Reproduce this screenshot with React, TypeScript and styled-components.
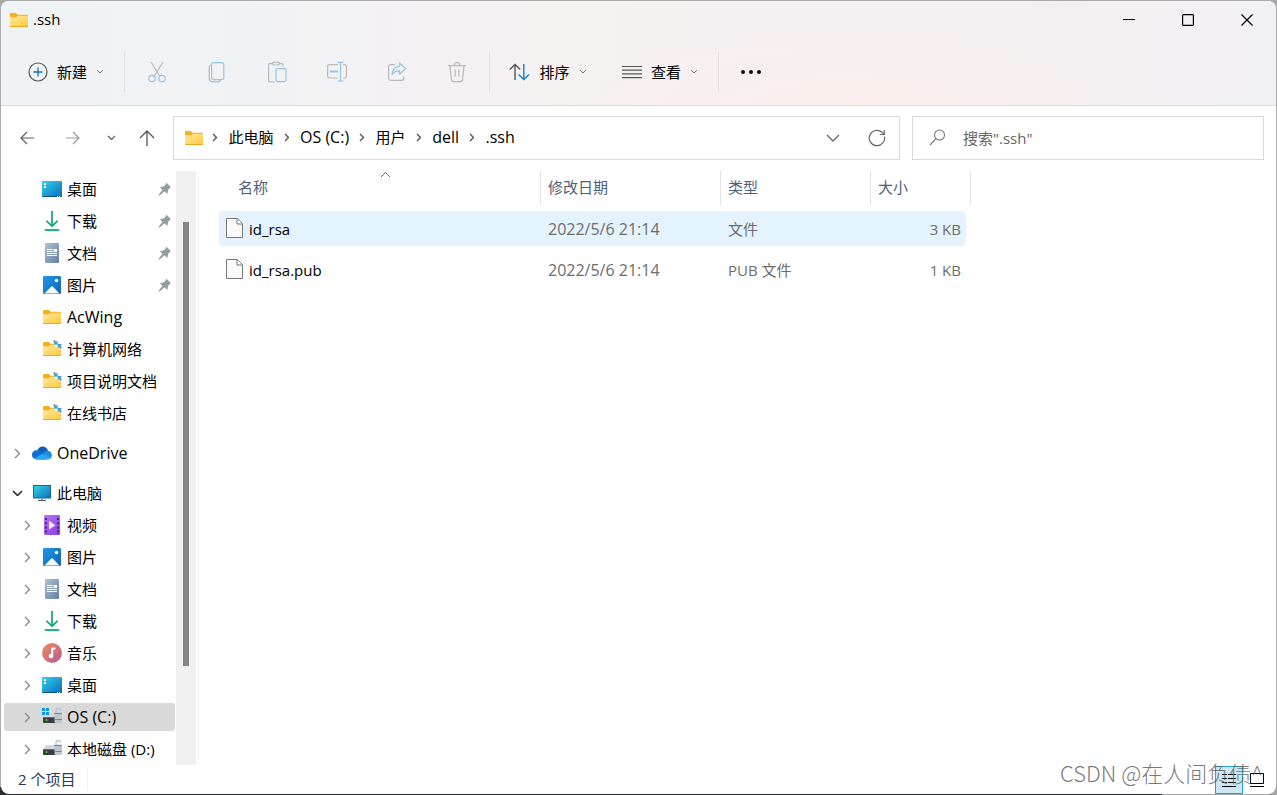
import React from "react";
import styled, { createGlobalStyle, css } from "styled-components";

const Global = createGlobalStyle`
  *, *::before, *::after { box-sizing: border-box; }
  html, body, #root { height: 100%; }
  body { margin: 0; overflow: hidden; }
  body, button, input, table {
    font-family: "Open Sans", "Noto Sans CJK SC", sans-serif;
    font-size: 15px;
    line-height: 20px;
    color: #000;
  }
`;

const Desktop = styled.div`
  height: 100vh;
  padding: 1px;
  background:
    linear-gradient(90deg, #2b2e33 0 91%, #a5a5a5 91%) bottom / 100% 8px no-repeat,
    #ababab;
`;

const Window = styled.main`
  position: relative;
  display: flex;
  flex-direction: column;
  height: 100%;
  border-radius: 8px;
  background: #fff;
  overflow: hidden;
`;

const Header = styled.header`
  border-bottom: 1px solid #dfdcdd;
  background:
    radial-gradient(ellipse 280px 80px at 67% 108%, rgba(252, 238, 235, 0.8), rgba(252, 238, 235, 0)),
    linear-gradient(90deg, #eff3f6 0%, #f2f2f4 22%, #f6f1f1 50%, #f5f0f1 76%, #f2f1f4 100%);
`;

const TitleBar = styled.div`
  display: flex;
  align-items: center;
  height: 37px;
  padding-left: 8px;
`;

const Title = styled.h1`
  flex: 1;
  margin: 0 0 0 4px;
  padding-bottom: 2px;
  font-size: 15px;
  font-weight: 400;
  line-height: 20px;
`;

const CaptionButton = styled.button`
  display: grid;
  place-items: center;
  width: 59px;
  height: 34px;
  padding: 0;
  border: 0;
  background: none;
`;

const Toolbar = styled.div`
  display: flex;
  align-items: center;
  height: 67px;
  padding-left: 9px;
`;

const ToolButton = styled.button<{ $wide?: boolean }>`
  display: flex;
  align-items: center;
  justify-content: center;
  flex: none;
  width: ${(p) => (p.$wide ? "112px" : "60px")};
  height: 40px;
  padding: 0;
  border: 0;
  background: none;
  gap: 9px;
  line-height: 20px;
`;

const ToolRule = styled.div`
  flex: none;
  width: 1px;
  height: 40px;
  margin: 0 2px;
  background: #e2e1e3;
`;

const NavBar = styled.div`
  display: flex;
  align-items: center;
  height: 65px;
  padding: 0 12px 2px 8px;
`;

const NavButton = styled.button<{ $width: number }>`
  display: grid;
  place-items: center;
  flex: none;
  width: ${(p) => p.$width}px;
  height: 36px;
  padding: 0;
  border: 0;
  background: none;
`;

const AddressBar = styled.div`
  display: flex;
  align-items: center;
  flex: 1;
  height: 44px;
  margin: 0 12px 0 0;
  padding-left: 10px;
  border: 1px solid #d9d9d9;
`;

const Crumbs = styled.ol`
  display: flex;
  align-items: center;
  flex: 1;
  margin: 0;
  padding: 0 0 0 8px;
  list-style: none;
`;

const Crumb = styled.li`
  display: flex;
  align-items: center;
  gap: 11px;
  padding-right: 10px;
`;

const CrumbLink = styled.a<{ $latin: boolean }>`
  padding-bottom: 2px;
  font-size: ${(p) => (p.$latin ? "16px" : "15px")};
  color: #000;
  text-decoration: none;
`;

const SearchBox = styled.label`
  display: flex;
  align-items: center;
  flex: none;
  width: 352px;
  height: 44px;
  padding: 0 16px;
  gap: 17px;
  border: 1px solid #d9d9d9;
`;

const SearchInput = styled.input`
  flex: 1;
  min-width: 0;
  padding: 0;
  border: 0;
  outline: 0;
  background: none;
  &::placeholder { color: #666; opacity: 1; }
`;

const Body = styled.div`
  display: flex;
  flex: 1;
  min-height: 0;
`;

const Sidebar = styled.nav`
  display: flex;
  flex: none;
  width: 198px;
  border-right: 1px solid #f4f4f4;
  overflow: hidden;
`;

const Tree = styled.ul`
  display: flex;
  flex-direction: column;
  flex: none;
  gap: 4px;
  width: 175px;
  margin: 0;
  padding: 4px 1px 0 3px;
  list-style: none;
`;

const TreeRow = styled.li<{ $level: number; $selected?: boolean; $spaced?: boolean }>`
  display: flex;
  align-items: center;
  flex: none;
  height: 28px;
  margin-top: ${(p) => (p.$spaced ? "8px" : "0")};
  padding: 0 3px 0 ${(p) => (p.$level === 0 ? "5px" : "15px")};
  border-radius: 3px;
  ${(p) => p.$selected && css`background: #d9d9d9;`}
`;

const Expander = styled.button`
  display: grid;
  place-items: center;
  flex: none;
  width: 16px;
  height: 20px;
  padding: 0;
  border: 0;
  background: none;
`;

const ExpanderGap = styled.span`
  flex: none;
  width: 16px;
`;

const TreeIcon = styled.span`
  display: grid;
  place-items: center;
  flex: none;
  width: 20px;
  margin: 0 5px 0 7px;
`;

const TreeLink = styled.a<{ $latin: boolean }>`
  flex: 1;
  font-size: ${(p) => (p.$latin ? "16px" : "15px")};
  color: #000;
  white-space: nowrap;
  text-decoration: none;
`;

const ScrollTrack = styled.div`
  flex: none;
  width: 20px;
  padding: 51px 7px 99px;
  background: #f0f0f0;
`;

const ScrollThumb = styled.div`
  height: 100%;
  background: #868686;
`;

const Content = styled.section`
  flex: 1;
  min-width: 0;
  padding-left: 20px;
`;

const FileTable = styled.table`
  width: 752px;
  margin-top: -6px;
  table-layout: fixed;
  border-collapse: separate;
  border-spacing: 0 6px;
`;

const HeadCell = styled.th<{ $width: number; $name?: boolean }>`
  position: relative;
  width: ${(p) => p.$width}px;
  height: 34px;
  padding: 0 0 2px ${(p) => (p.$name ? "19px" : "7px")};
  border-right: 1px solid #e3e3e3;
  font-weight: 400;
  text-align: left;
  color: #4c607a;
`;

const SortMark = styled.svg`
  position: absolute;
  top: 0;
  left: 161px;
`;

const FileRow = styled.tr<{ $hot?: boolean }>`
  & > td { background-color: ${(p) => (p.$hot ? "#e5f3ff" : "transparent")}; }
`;

const Cell = styled.td<{ $last?: boolean }>`
  height: 35px;
  padding: 0 5px 0 7px;
  color: #6d6d6d;
  background-clip: padding-box;
  ${(p) => p.$last && css`
    border-right: 5px solid transparent;
    border-radius: 0 8px 8px 0;
    text-align: right;
  `}
`;

const NameCell = styled(Cell)`
  border-radius: 3px 0 0 3px;
  color: #000;
`;

const DateCell = styled(Cell)`
  font-size: 16px;
`;

const FileName = styled.span`
  display: flex;
  align-items: center;
  gap: 6px;
`;

const StatusBar = styled.footer`
  display: flex;
  align-items: center;
  flex: none;
  height: 29px;
  padding: 0 5px 0 17px;
`;

const StatusText = styled.span`
  margin-right: auto;
  padding: 0 12px 2px 0;
  border-right: 1px solid #f0f0f0;
  color: #23395b;
`;

const ViewButton = styled.button<{ $active?: boolean }>`
  display: grid;
  place-items: center;
  width: 28px;
  height: 28px;
  padding: 0;
  border: 1px solid ${(p) => (p.$active ? "#26a0da" : "transparent")};
  background: ${(p) => (p.$active ? "#cce8f6" : "none")};
`;

const Watermark = styled.span`
  position: absolute;
  right: 13px;
  bottom: 6px;
  font-family: "Noto Sans CJK SC", sans-serif;
  font-size: 22px;
  font-weight: 300;
  line-height: 32px;
  color: rgba(95, 95, 95, 0.85);
  pointer-events: none;
`;

const isLatin = (text: string) => /^[\x20-\x7e]+$/.test(text);

function Chevron({ dir, size = 8, color = "#666", width = 1 }: { dir: "right" | "down"; size?: number; color?: string; width?: number }) {
  const half = size / 2;
  const paths = {
    right: { w: half + 2, h: size + 2, d: `M1 1 L${half + 1} ${half + 1} L1 ${size + 1}` },
    down: { w: size + 2, h: half + 2, d: `M1 1 L${half + 1} ${half + 1} L${size + 1} 1` },
  };
  const p = paths[dir];
  return (
    <svg width={p.w} height={p.h} viewBox={`0 0 ${p.w} ${p.h}`} fill="none" stroke={color} strokeWidth={width}>
      <path d={p.d} />
    </svg>
  );
}

function FolderIcon({ linked }: { linked?: boolean }) {
  return (
    <svg width="20" height="18" viewBox="0 0 20 18">
      <defs>
        <linearGradient id="folderFront" x1="0" y1="0" x2="1" y2="1">
          <stop offset="0" stopColor="#ffe8a0" />
          <stop offset="1" stopColor="#ffca3a" />
        </linearGradient>
      </defs>
      <path d="M1 3.2C1 2.5 1.5 2 2.2 2H7l1.6 1.8H18c.6 0 1 .4 1 1V8H1z" fill="#f5b01b" />
      <path d="M1 6.2h6.2L9 4.8h9c.6 0 1 .4 1 1V15c0 .6-.4 1-1 1H2c-.6 0-1-.4-1-1z" fill="url(#folderFront)" />
      <path d="M1.2 15.5h17.600" stroke="#eba91c" strokeWidth="1" />
      {linked && (
        <g>
          <path d="M11 .3h8.700v8H15L11 5z" fill="#fff" opacity=".55" />
          <path d="M11.500.5l3 2.800M19.500 8l-2.800-2.600" stroke="#3a9ad6" strokeWidth="1.800" />
          <path d="M11 4.600h4.600V.4zM15.700 4v4.500L20 4z" fill="#3a9ad6" />
        </g>
      )}
    </svg>
  );
}

function DesktopIcon() {
  return (
    <svg width="20" height="16" viewBox="0 0 20 16">
      <defs>
        <linearGradient id="deskFill" x1="0" y1="0" x2="1" y2="1">
          <stop offset="0" stopColor="#34d3e6" />
          <stop offset="1" stopColor="#0b69c2" />
        </linearGradient>
      </defs>
      <rect width="20" height="16" rx="1" fill="url(#deskFill)" />
      <path d="M0 15h20a1 1 0 0 1-1 1H1a1 1 0 0 1-1-1z" fill="#0a5187" />
      <path d="M2 2h2v2H2zM2 5h2v2H2zM15 15h1v1h-1zM17 15h1v1h-1z" fill="#fff" />
    </svg>
  );
}

function DownloadIcon() {
  return (
    <svg width="20" height="20" viewBox="0 0 20 20" fill="none" strokeWidth="1.8">
      <path d="M10 0v15M4.5 9.8L10 15.200l5.500-5.400" stroke="#17a884" />
      <path d="M3.500 19h13" stroke="#25b383" strokeLinecap="round" />
    </svg>
  );
}

function DocumentIcon() {
  return (
    <svg width="20" height="20" viewBox="0 0 20 20">
      <defs>
        <linearGradient id="docFill" x1="0" y1="0" x2="1" y2="1">
          <stop offset="0" stopColor="#b1c2d4" />
          <stop offset="1" stopColor="#64809f" />
        </linearGradient>
      </defs>
      <rect x="3" width="14" height="20" rx="1.2" fill="url(#docFill)" />
      <path d="M5 6.500h5.500M5 8.500h5.500M5 10.500h10M5 12.500h10" stroke="#fff" strokeWidth="1" />
      <rect x="11.500" y="6" width="3.500" height="3" fill="#fff" />
    </svg>
  );
}

function PictureIcon() {
  return (
    <svg width="18" height="18" viewBox="0 0 18 18">
      <defs>
        <linearGradient id="picFill" x1="0" y1="0" x2="1" y2="1">
          <stop offset="0" stopColor="#1d9ae8" />
          <stop offset="1" stopColor="#0c63b4" />
        </linearGradient>
      </defs>
      <rect width="18" height="18" rx="1.2" fill="url(#picFill)" />
      <path d="M1.500 17.600L8 10.800c.6-.6 1.400-.6 2 0l6.500 6.800z" fill="#f3fafe" />
      <circle cx="13.500" cy="4.500" r="1.700" fill="#fff" />
    </svg>
  );
}

function OneDriveIcon() {
  return (
    <svg width="20" height="14" viewBox="0 0 20 14">
      <path d="M5 5.500C6 2.500 8 .6 10.500.6c2.700 0 4.800 1.700 5.500 4.200L11 9z" fill="#0f5fb4" />
      <path d="M4.600 13.400A4.600 4.600 0 0 1 4.500 4.200c1.500-.2 2.700.3 3.700 1l8 4.800-2 3.400z" fill="#1170cf" />
      <path d="M11 7.500c1.200-1.800 2.800-3 5-2.800 2.200.2 3.800 2 3.900 4.200 0 1.500-.6 2.800-1.800 3.600z" fill="#1b8fe3" />
      <path d="M2.500 12.400L11 7.500l7.800 4.600c-.6.8-1.600 1.300-2.700 1.300H5c-1 0-1.800-.4-2.500-1z" fill="#2aa7ee" />
    </svg>
  );
}

function ComputerIcon() {
  return (
    <svg width="20" height="18" viewBox="0 0 20 18">
      <defs>
        <linearGradient id="pcFill" x1="0" y1="0" x2="1" y2="1">
          <stop offset="0" stopColor="#37d6e4" />
          <stop offset="1" stopColor="#0c6dc2" />
        </linearGradient>
      </defs>
      <rect x="1.500" y="1.500" width="17" height="12.500" fill="url(#pcFill)" stroke="#1b6494" />
      <path d="M9 14.500h2V16H9z" fill="#8c959c" />
      <path d="M6 16.500h8" stroke="#59636b" strokeWidth="1.200" />
    </svg>
  );
}

function VideoIcon() {
  return (
    <svg width="20" height="20" viewBox="0 0 20 20">
      <defs>
        <linearGradient id="vidFill" x1="0" y1="0" x2="1" y2="1">
          <stop offset="0" stopColor="#b873f5" />
          <stop offset="1" stopColor="#8a3ddb" />
        </linearGradient>
      </defs>
      <rect x="2" width="16" height="20" rx="1.200" fill="url(#vidFill)" />
      <path d="M4 3v15M16 3v15" stroke="#43206e" strokeWidth="1.800" strokeDasharray="2 2.200" />
      <path d="M7 5.800l6.500 4.400L7 14.600z" fill="#f4eafd" />
    </svg>
  );
}

function MusicIcon() {
  return (
    <svg width="20" height="20" viewBox="0 0 20 20">
      <defs>
        <linearGradient id="musFill" x1="0" y1="0" x2="1" y2="1">
          <stop offset="0" stopColor="#f08a56" />
          <stop offset="1" stopColor="#b25c9e" />
        </linearGradient>
      </defs>
      <circle cx="10" cy="10" r="10" fill="url(#musFill)" />
      <path d="M10.200 4.500v8M10.200 5.500h3.300" stroke="#fff" strokeWidth="2" />
      <circle cx="9" cy="13" r="2.300" fill="#fff" />
    </svg>
  );
}

function DriveIcon({ system }: { system?: boolean }) {
  return (
    <svg width="20" height="20" viewBox="0 0 20 20">
      {system ? (
        <path d="M0 1h3v3H0zM4 1h3v3H4zM0 5h3v3H0zM4 5h3v3H4z" fill="#0f94e0" />
      ) : (
        <path d="M4 6h13l2 4.500H1z" fill="#d3d7da" />
      )}
      <path d="M1 10h14v1H1z" fill="#8b9094" />
      <rect x="1" y="10.500" width="13" height="5.500" rx=".8" fill="#393d40" />
      <circle cx="4.500" cy="13" r="1" fill="#41de56" />
      <path d="M14 6V3.700c0-3 4.500-3 4.500 0" fill="none" stroke="#b5c2cc" strokeWidth="1.300" />
      <rect x="12.500" y="5.500" width="7.500" height="10.500" rx="1.500" fill="#b9c7d1" />
      <path d="M12 6.500h8M12 12.500h8" stroke="#369fda" strokeWidth="1" />
    </svg>
  );
}

function PinIcon() {
  return (
    <svg width="14" height="14" viewBox="0 0 14 14">
      <path d="M8.500.8l4.700 4.700-1.500.5-1.700 2.200-.6 3.800-2.900-2.800L1.500 13.700.5 13l4-5.300L1.800 5 5.600 4.400 7.800 2.500z" fill="#929ca3" />
    </svg>
  );
}

function FileIcon() {
  return (
    <svg width="17" height="21" viewBox="0 0 17 21" fill="#fafafa" stroke="#777" strokeWidth="1">
      <path d="M.5.5h11l5 5v14H.5z" />
      <path d="M11 .5v5.500h5.500" fill="#fff" />
    </svg>
  );
}

type TreeEntry = {
  label: string;
  icon: React.ReactNode;
  level?: number;
  state?: "closed" | "open";
  pinned?: boolean;
  selected?: boolean;
  spaced?: boolean;
};

const tree: TreeEntry[] = [
  { label: "桌面", icon: <DesktopIcon />, pinned: true },
  { label: "下载", icon: <DownloadIcon />, pinned: true },
  { label: "文档", icon: <DocumentIcon />, pinned: true },
  { label: "图片", icon: <PictureIcon />, pinned: true },
  { label: "AcWing", icon: <FolderIcon /> },
  { label: "计算机网络", icon: <FolderIcon linked /> },
  { label: "项目说明文档", icon: <FolderIcon linked /> },
  { label: "在线书店", icon: <FolderIcon linked /> },
  { label: "OneDrive", icon: <OneDriveIcon />, level: 0, state: "closed", spaced: true },
  { label: "此电脑", icon: <ComputerIcon />, level: 0, state: "open", spaced: true },
  { label: "视频", icon: <VideoIcon />, state: "closed" },
  { label: "图片", icon: <PictureIcon />, state: "closed" },
  { label: "文档", icon: <DocumentIcon />, state: "closed" },
  { label: "下载", icon: <DownloadIcon />, state: "closed" },
  { label: "音乐", icon: <MusicIcon />, state: "closed" },
  { label: "桌面", icon: <DesktopIcon />, state: "closed" },
  { label: "OS (C:)", icon: <DriveIcon system />, state: "closed", selected: true },
  { label: "本地磁盘 (D:)", icon: <DriveIcon />, state: "closed" },
];

const files = [
  { name: "id_rsa", date: "2022/5/6 21:14", type: "文件", size: "3 KB", hot: true },
  { name: "id_rsa.pub", date: "2022/5/6 21:14", type: "PUB 文件", size: "1 KB", hot: false },
];

const crumbs = ["此电脑", "OS (C:)", "用户", "dell", ".ssh"];

const GREY = "#b9b9bb";
const BLUE = "#92c5ea";

const editTools = [
  {
    label: "剪切",
    icon: (
      <svg width="20" height="22" viewBox="0 0 20 22" fill="none" strokeWidth="1.200">
        <path d="M4 1l8.800 14.200M16 1L7.200 15.200" stroke={GREY} />
        <circle cx="5" cy="17.500" r="3.200" stroke={BLUE} />
        <circle cx="15" cy="17.500" r="3.200" stroke={BLUE} />
      </svg>
    ),
  },
  {
    label: "复制",
    icon: (
      <svg width="20" height="22" viewBox="0 0 20 22" fill="none" strokeWidth="1.200">
        <path d="M4 4c-1.200.3-1.800 1-1.800 2.200V17c0 2.400 1.400 3.800 3.800 3.800h5c1.300 0 2-.5 2.500-1.600" stroke={GREY} />
        <rect x="4.600" y="1.600" width="12.200" height="17" rx="2" stroke={BLUE} />
      </svg>
    ),
  },
  {
    label: "粘贴",
    icon: (
      <svg width="20" height="22" viewBox="0 0 20 22" fill="none" strokeWidth="1.200">
        <path d="M6 2.600H3c-.9 0-1.400.5-1.400 1.400v15.400c0 .9.500 1.400 1.400 1.400h4.600M12 2.600h2.600c.9 0 1.400.5 1.400 1.400v1.500" stroke={GREY} />
        <rect x="5.600" y="1.400" width="6.800" height="2.600" rx="1.300" stroke={GREY} />
        <rect x="9" y="7.600" width="10" height="13" rx="1.500" stroke={BLUE} />
      </svg>
    ),
  },
  {
    label: "重命名",
    icon: (
      <svg width="22" height="22" viewBox="0 0 22 22" fill="none" strokeWidth="1.200">
        <path d="M12 3.600H3.500c-1.200 0-1.900.7-1.900 1.900v9.600c0 1.200.7 1.900 1.900 1.900H12M17 3.600h1.500c1.200 0 1.900.7 1.900 1.900v9.600c0 1.200-.7 1.900-1.900 1.900H17" stroke={GREY} />
        <path d="M14.500 1.500v18M11.500 1.400h6M11.500 20h6" stroke={BLUE} />
        <path d="M4 10.400h8" stroke={BLUE} strokeWidth="2" />
      </svg>
    ),
  },
  {
    label: "共享",
    icon: (
      <svg width="20" height="22" viewBox="0 0 20 22" fill="none" strokeWidth="1.200" strokeLinejoin="round">
        <path d="M8 3.600H4c-1.600 0-2.400.8-2.400 2.400v11c0 1.600.8 2.400 2.400 2.400h10.500c1.600 0 2.400-.8 2.400-2.400v-1.500" stroke={GREY} />
        <path d="M12.500 2l6.200 5.500-6.200 5.700v-3.300c-3.300-.1-5.600 1-7.500 3.700.4-4.800 2.900-8 7.500-8.300z" stroke={BLUE} />
      </svg>
    ),
  },
  {
    label: "删除",
    icon: (
      <svg width="20" height="22" viewBox="0 0 20 22" fill="none" stroke={GREY} strokeWidth="1.200">
        <path d="M1 4.600h18M7.300 4.400c0-4 5.400-4 5.400 0M3 4.600l1.400 14c.1 1.300.8 2 2 2h7.200c1.200 0 1.900-.7 2-2l1.400-14M8.200 8.500v7M11.800 8.500v7" />
      </svg>
    ),
  },
];

export default function App() {
  return (
    <>
      <Global />
      <Desktop>
        <Window>
          <Header>
            <TitleBar>
              <FolderIcon />
              <Title>.ssh</Title>
              <CaptionButton aria-label="最小化">
                <svg width="12" height="12" viewBox="0 0 12 12"><path d="M0 5.500h12" stroke="#000" /></svg>
              </CaptionButton>
              <CaptionButton aria-label="最大化">
                <svg width="12" height="12" viewBox="0 0 12 12"><rect x=".6" y=".6" width="10.800" height="10.800" rx="1" fill="none" stroke="#000" strokeWidth="1.200" /></svg>
              </CaptionButton>
              <CaptionButton aria-label="关闭">
                <svg width="12" height="12" viewBox="0 0 12 12"><path d="M.5.5l11 11M11.500.5l-11 11" stroke="#000" strokeWidth="1.200" /></svg>
              </CaptionButton>
            </TitleBar>
            <Toolbar>
              <ToolButton $wide>
                <svg width="20" height="20" viewBox="0 0 20 20" fill="none">
                  <circle cx="10" cy="10" r="9" stroke="#555" strokeWidth="1.200" />
                  <path d="M10 5.500v9M5.500 10h9" stroke="#0a74cc" strokeWidth="1.300" />
                </svg>
                新建
                <Chevron dir="down" size={6} color="#777" />
              </ToolButton>
              <ToolRule />
              {editTools.map((t) => (
                <ToolButton key={t.label} aria-label={t.label} disabled>{t.icon}</ToolButton>
              ))}
              <ToolRule />
              <ToolButton $wide>
                <svg width="21" height="18" viewBox="0 0 21 18" fill="none" strokeWidth="1.400">
                  <path d="M6 17V1.500M.8 6.600L6 1.400l5.200 5.200" stroke="#555" />
                  <path d="M14.800 1v15.500M9.600 11.400l5.200 5.200 5.200-5.200" stroke="#0f7fdb" />
                </svg>
                排序
                <Chevron dir="down" size={6} color="#777" />
              </ToolButton>
              <ToolButton $wide>
                <svg width="20" height="14" viewBox="0 0 20 14" stroke="#555" strokeWidth="1.200">
                  <path d="M0 1.500h20M0 5.200h20M0 8.900h20M0 12.600h20" />
                </svg>
                查看
                <Chevron dir="down" size={6} color="#777" />
              </ToolButton>
              <ToolRule />
              <ToolButton aria-label="更多">
                <svg width="20" height="4" viewBox="0 0 20 4" fill="#111">
                  <circle cx="2" cy="2" r="2" /><circle cx="10" cy="2" r="2" /><circle cx="18" cy="2" r="2" />
                </svg>
              </ToolButton>
            </Toolbar>
          </Header>

          <NavBar>
            <NavButton $width={36} aria-label="后退">
              <svg width="14" height="14" viewBox="0 0 14 14" fill="none" stroke="#5f5f5f" strokeWidth="1.200"><path d="M14 7H1M7 1L1 7l6 6" /></svg>
            </NavButton>
            <NavButton $width={56} aria-label="前进">
              <svg width="14" height="14" viewBox="0 0 14 14" fill="none" stroke="#9b9b9b" strokeWidth="1.200"><path d="M0 7h13M7 1l6 6-6 6" /></svg>
            </NavButton>
            <NavButton $width={20} aria-label="最近的位置"><Chevron dir="down" size={7} width={1.3} /></NavButton>
            <NavButton $width={52} aria-label="向上">
              <svg width="16" height="16" viewBox="0 0 16 16" fill="none" stroke="#555" strokeWidth="1.300"><path d="M8 16V1M1 8l7-7 7 7" /></svg>
            </NavButton>
            <AddressBar>
              <FolderIcon />
              <Crumbs>
                {crumbs.map((c) => (
                  <Crumb key={c}>
                    <Chevron dir="right" size={7} color="#555" width={1.4} />
                    <CrumbLink href="#" $latin={isLatin(c)}>{c}</CrumbLink>
                  </Crumb>
                ))}
              </Crumbs>
              <NavButton $width={44} aria-label="历史"><Chevron dir="down" size={12} width={1.3} /></NavButton>
              <NavButton $width={44} aria-label="刷新">
                <svg width="18" height="18" viewBox="0 0 18 18" fill="none" stroke="#666" strokeWidth="1.200">
                  <path d="M16.500 7.500a7.700 7.700 0 1 1-2.500-4.300l2 2M16.300 1v4.500h-4.500" />
                </svg>
              </NavButton>
            </AddressBar>
            <SearchBox>
              <svg width="17" height="17" viewBox="0 0 17 17" fill="none" stroke="#777" strokeWidth="1.100">
                <circle cx="10.500" cy="6" r="5" /><path d="M7 9.700L1 16" />
              </svg>
              <SearchInput type="text" aria-label="搜索" placeholder={'搜索".ssh"'} />
            </SearchBox>
          </NavBar>

          <Body>
            <Sidebar>
              <Tree>
                {tree.map((t, i) => (
                  <TreeRow key={i} $level={t.level ?? 1} $selected={t.selected} $spaced={t.spaced}>
                    {t.state ? (
                      <Expander aria-label={t.state === "open" ? "折叠" : "展开"}>
                        {t.state === "open"
                          ? <Chevron dir="down" size={9} color="#222" width={1.5} />
                          : <Chevron dir="right" size={9} color="#888" width={1.3} />}
                      </Expander>
                    ) : <ExpanderGap />}
                    <TreeIcon>{t.icon}</TreeIcon>
                    <TreeLink href="#" $latin={isLatin(t.label)}>{t.label}</TreeLink>
                    {t.pinned && <PinIcon />}
                  </TreeRow>
                ))}
              </Tree>
              <ScrollTrack><ScrollThumb /></ScrollTrack>
            </Sidebar>
            <Content>
              <FileTable>
                <thead>
                  <tr>
                    <HeadCell $width={322} $name>
                      名称
                      <SortMark width="11" height="7" viewBox="0 0 11 7" fill="none" stroke="#666">
                        <path d="M1 6l4.500-4.500L10 6" />
                      </SortMark>
                    </HeadCell>
                    <HeadCell $width={180}>修改日期</HeadCell>
                    <HeadCell $width={150}>类型</HeadCell>
                    <HeadCell $width={100}>大小</HeadCell>
                  </tr>
                </thead>
                <tbody>
                  {files.map((f) => (
                    <FileRow key={f.name} $hot={f.hot}>
                      <NameCell><FileName><FileIcon />{f.name}</FileName></NameCell>
                      <DateCell>{f.date}</DateCell>
                      <Cell>{f.type}</Cell>
                      <Cell $last>{f.size}</Cell>
                    </FileRow>
                  ))}
                </tbody>
              </FileTable>
            </Content>
          </Body>

          <StatusBar>
            <StatusText>2 个项目</StatusText>
            <ViewButton $active aria-label="详细信息">
              <svg width="14" height="14" viewBox="0 0 14 14" stroke="#000" fill="none">
                <path d="M0 1.500h5M6 1.500h8M0 5.500h5M6 5.500h8M0 9.500h5M6 9.500h8M0 13.500h14" />
              </svg>
            </ViewButton>
            <ViewButton aria-label="大图标">
              <svg width="14" height="14" viewBox="0 0 14 14" stroke="#000" fill="none">
                <path d="M.5.5h13v10H.5zM0 13.500h14" />
              </svg>
            </ViewButton>
          </StatusBar>
          <Watermark>CSDN @在人间负债^</Watermark>
        </Window>
      </Desktop>
    </>
  );
}
